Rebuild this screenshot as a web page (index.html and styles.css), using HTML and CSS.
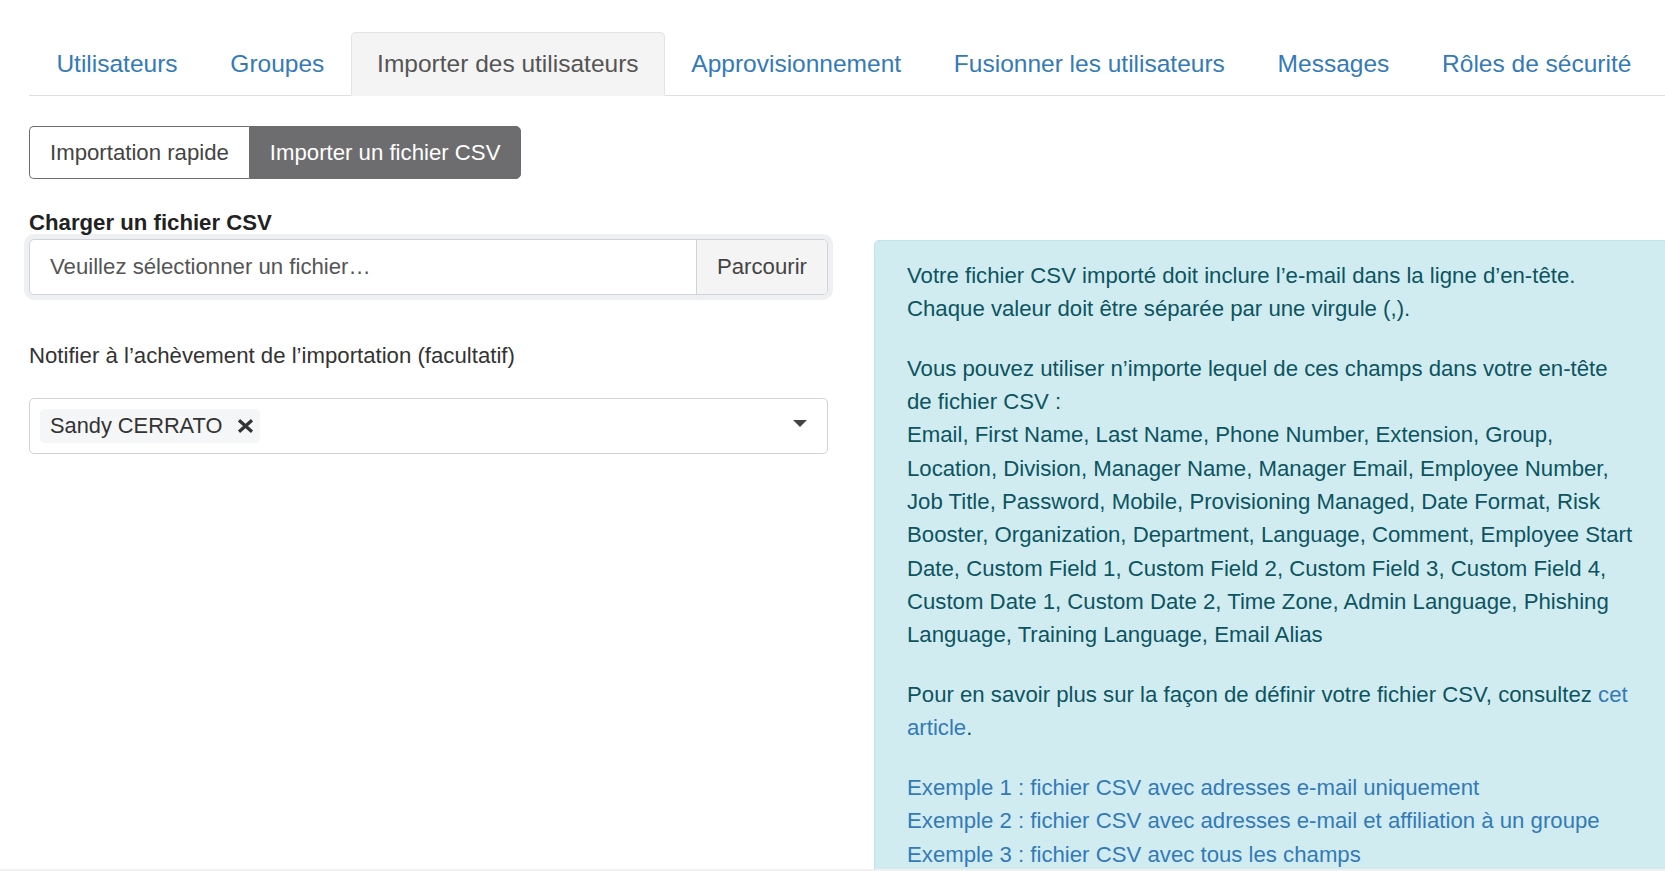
FILE: index.html
```html
<!DOCTYPE html>
<html lang="fr">
<head>
<meta charset="utf-8">
<title>Importer des utilisateurs</title>
<link rel="stylesheet" href="styles.css">
</head>
<body>
<div class="page">
  <ul class="tabs">
    <li><a class="tab" href="#">Utilisateurs</a></li>
    <li><a class="tab" href="#">Groupes</a></li>
    <li><a class="tab active" href="#">Importer des utilisateurs</a></li>
    <li><a class="tab" href="#">Approvisionnement</a></li>
    <li><a class="tab" href="#">Fusionner les utilisateurs</a></li>
    <li><a class="tab" href="#">Messages</a></li>
    <li><a class="tab" href="#">Rôles de sécurité</a></li>
  </ul>

  <div class="seg-group">
    <button class="seg seg-first" type="button">Importation rapide</button>
    <button class="seg seg-active" type="button">Importer un fichier CSV</button>
  </div>

  <div class="row">
    <div class="left">
      <label class="field-label">Charger un fichier CSV</label>
      <div class="file-input">
        <span class="placeholder">Veuillez sélectionner un fichier…</span>
        <span class="browse">Parcourir</span>
      </div>
      <p class="notify">Notifier à l’achèvement de l’importation (facultatif)</p>
      <div class="select">
        <span class="tag">Sandy CERRATO
          <svg class="tag-x" width="17" height="14" viewBox="0 0 17 14"><path d="M2 1.3 L15 12.7 M15 1.3 L2 12.7" stroke="#333" stroke-width="3.3" fill="none"/></svg>
        </span>
        <svg class="caret" width="14" height="7" viewBox="0 0 14 7"><polygon points="0,0 14,0 7,7" fill="#444"/></svg>
      </div>
    </div>

    <div class="info">
      <p>Votre fichier CSV importé doit inclure l’e-mail dans la ligne d’en-tête.<br>Chaque valeur doit être séparée par une virgule (,).</p>
      <p>Vous pouvez utiliser n’importe lequel de ces champs dans votre en-tête<br>de fichier CSV :<br>Email, First Name, Last Name, Phone Number, Extension, Group,<br>Location, Division, Manager Name, Manager Email, Employee Number,<br>Job Title, Password, Mobile, Provisioning Managed, Date Format, Risk<br>Booster, Organization, Department, Language, Comment, Employee Start<br>Date, Custom Field 1, Custom Field 2, Custom Field 3, Custom Field 4,<br>Custom Date 1, Custom Date 2, Time Zone, Admin Language, Phishing<br>Language, Training Language, Email Alias</p>
      <p>Pour en savoir plus sur la façon de définir votre fichier CSV, consultez <a href="#">cet<br>article</a>.</p>
      <div class="examples">
        <a href="#">Exemple 1 : fichier CSV avec adresses e-mail uniquement</a>
        <a href="#">Exemple 2 : fichier CSV avec adresses e-mail et affiliation à un groupe</a>
        <a href="#">Exemple 3 : fichier CSV avec tous les champs</a>
      </div>
    </div>
  </div>
</div>
<div class="hscroll"></div>
</body>
</html>
```

FILE: styles.css
```css
html, body {
  margin: 0;
  padding: 0;
  overflow: hidden;
  background: #fff;
}

body {
  font-family: "Liberation Sans", Arial, sans-serif;
  color: #333;
  width: 1665px;
  height: 871px;
}

.page {
  padding: 32px 0 0 29px;
}

/* Tabs */
.tabs {
  display: flex;
  list-style: none;
  margin: 0;
  padding: 0 0 0 1px;
  border-bottom: 1px solid #dfdfdf;
  height: 63px;
}

.tab {
  display: block;
  box-sizing: border-box;
  height: 64px;
  margin-bottom: -1px;
  padding: 0 25.4px;
  border: 1px solid transparent;
  border-radius: 5px 5px 0 0;
  font-size: 24.5px;
  line-height: 62px;
  color: #337ab7;
  text-decoration: none;
  white-space: nowrap;
}

.tab.active {
  background: #f4f4f4;
  border-color: #e3e3e3;
  border-bottom-color: #f4f4f4;
  color: #555;
}

/* Segmented buttons */
.seg-group {
  display: inline-flex;
  margin-top: 30px;
}

.seg {
  box-sizing: border-box;
  height: 53px;
  padding: 0 20px;
  margin: 0;
  font-family: "Liberation Sans", Arial, sans-serif;
  font-size: 22.2px;
  border: 1px solid #6d6d6f;
  background: #fff;
  color: #444;
  cursor: pointer;
}

.seg-first {
  border-radius: 5px 0 0 5px;
  border-right: none;
}

.seg-active {
  background: #6d6d6f;
  color: #fff;
  border-radius: 0 5px 5px 0;
}

/* Row */
.row {
  display: flex;
  align-items: flex-start;
  gap: 46px;
}

.left {
  width: 799px;
  flex: none;
  padding-top: 27px;
}

.field-label {
  display: block;
  font-size: 22.2px;
  line-height: 33.3px;
  font-weight: bold;
  color: #222;
}

.file-input {
  display: flex;
  box-sizing: border-box;
  height: 56px;
  border: 1px solid #cfd4d9;
  border-radius: 5px;
  box-shadow: 0 0 0 5px #eff0f2;
  background: #fff;
  overflow: hidden;
}

.placeholder {
  flex: 1;
  padding-left: 20px;
  font-size: 22.2px;
  line-height: 54px;
  color: #555;
}

.browse {
  flex: none;
  padding: 0 20px;
  background: #f4f4f5;
  border-left: 1px solid #cfd4d9;
  font-size: 22.2px;
  line-height: 54px;
  color: #444;
}

.notify {
  margin: 44px 0 25px;
  font-size: 22.2px;
  line-height: 33.3px;
  color: #333;
}

.select {
  display: flex;
  align-items: center;
  box-sizing: border-box;
  height: 56px;
  padding-left: 10px;
  border: 1px solid #d0d4d8;
  border-radius: 5px;
  background: #fff;
}

.tag {
  display: inline-flex;
  align-items: center;
  height: 34px;
  padding: 0 6px 0 10px;
  background: #f5f6f7;
  border-radius: 5px;
  font-size: 21.8px;
  color: #333;
}

.tag-x {
  margin-left: 15px;
}

.caret {
  margin-left: auto;
  margin-right: 20px;
  margin-top: -4px;
}

/* Info panel */
.info {
  flex: none;
  box-sizing: border-box;
  width: 820px;
  margin-top: 60.5px;
  min-height: 700px;
  padding: 18.3px 32px;
  background: #d1ecf1;
  border: 1px solid #bee5eb;
  border-radius: 5px;
  color: #0c5460;
  font-size: 22.2px;
  line-height: 33.3px;
  white-space: nowrap;
}

.info p {
  margin: 0 0 26.5px;
}

.info a {
  color: #337ab7;
  text-decoration: none;
}

.examples a {
  display: block;
}

.hscroll {
  position: fixed;
  left: 0;
  right: 0;
  bottom: 0;
  height: 2px;
  background: #f0f0f0;
}
```
